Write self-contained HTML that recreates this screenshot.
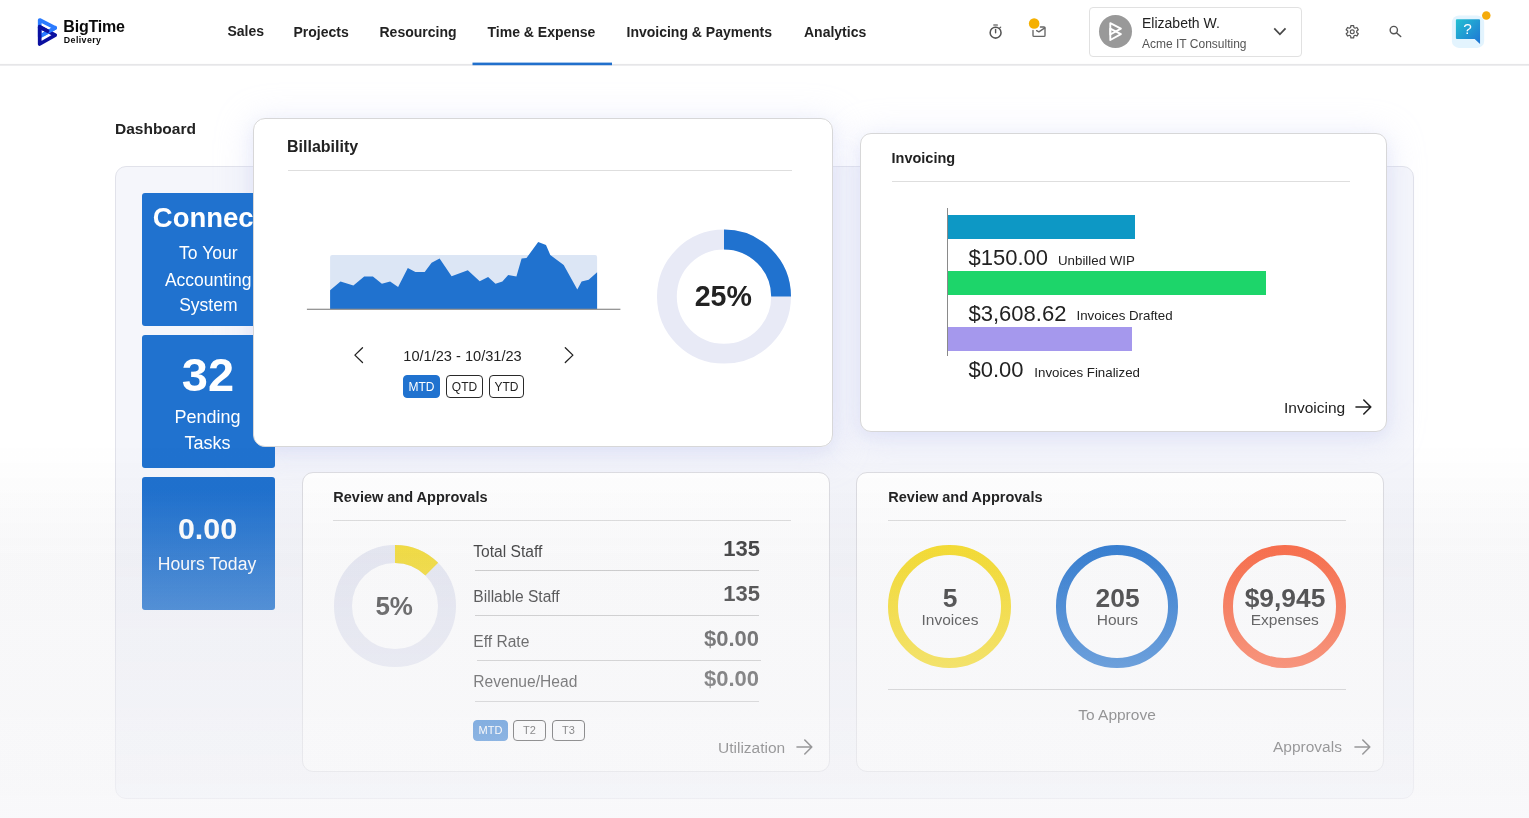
<!DOCTYPE html>
<html>
<head>
<meta charset="utf-8">
<title>BigTime Dashboard</title>
<style>
*{box-sizing:border-box;margin:0;padding:0}
html,body{width:1529px;height:818px;overflow:hidden;background:#fff}
body{font-family:"Liberation Sans",sans-serif;color:#222;position:relative}
#root{position:absolute;left:0;top:0;width:1529px;height:818px;will-change:transform}
.abs{position:absolute}
.t{position:absolute;white-space:nowrap;line-height:1}
.b{font-weight:bold}
/* header */
#hdr{position:absolute;left:0;top:0;width:1529px;height:66px;background:#fff}
.nav{position:absolute;top:24px;font-size:14px;font-weight:bold;color:#222;white-space:nowrap;line-height:16px}
#acct{position:absolute;left:1089px;top:7px;width:213px;height:50px;border:1px solid #e1e1e1;border-radius:4px;background:#fff}
/* panel */
#panel{position:absolute;left:115px;top:166px;width:1299px;height:633px;border-radius:11px;background:#f5f6fb;border:1px solid #e1e2ea}
.tile{position:absolute;left:142px;width:133px;height:133px;border-radius:3px;background:#2072cf;color:#fff;text-align:center;overflow:hidden}
.card{position:absolute;background:#fff;border:1px solid #d7d7d8;border-radius:11px}
.sh{position:absolute;border-radius:12px;box-shadow:0 5px 14px 0 rgba(196,202,242,.24),0 5px 34px 3px rgba(208,212,245,.40)}
.in{position:absolute;left:-1px;top:-1px;width:100%;height:100%}
.hr{position:absolute;height:1px;background:#dedede}
.btn{position:absolute;padding-top:.6px;border:1px solid #2a2a2a;border-radius:4px;font-size:12px;text-align:center;color:#222;background:#fff}
#fade{position:absolute;left:0;top:440px;width:1529px;height:378px;pointer-events:none;background:linear-gradient(to bottom,rgba(248,248,250,0) 0%,rgba(248,248,250,0) 13%,rgba(248,248,250,.66) 100%),linear-gradient(to bottom,rgba(10,10,50,0) 0%,rgba(10,10,50,.031) 32%,rgba(10,10,50,.031) 88%,rgba(10,10,50,.02) 100%)}
</style>
</head>
<body>
<div id="root">

<!-- ================= HEADER ================= -->
<div id="hdr">
  <svg class="abs" style="left:34px;top:14px" width="28" height="36" viewBox="0 0 28 36">
    <g fill="none" stroke-width="3.7" stroke-linejoin="round" stroke-linecap="round">
      <path d="M5.7 6 L21.2 13.8 L5.7 22.6 Z" stroke="#2b7bff"/>
      <path d="M5.7 12.8 L21.2 21.2 L5.7 30 Z" stroke="#0b10a0"/>
      <path d="M21.2 13.8 L9.5 20.4" stroke="#2b7bff"/>
      <path d="M5.7 12.8 L13.6 17.1" stroke="#0b10a0"/>
    </g>
  </svg>
  <div class="t b" style="left:63.3px;top:18.8px;font-size:16px;letter-spacing:-.2px;color:#0a0a0a">BigTime</div>
  <div class="t b" style="left:63.8px;top:35.6px;font-size:8.8px;letter-spacing:.42px;color:#0a0a0a">Delivery</div>

  <div class="nav" style="left:227.5px;top:23px">Sales</div>
  <div class="nav" style="left:293.5px">Projects</div>
  <div class="nav" style="left:379.5px">Resourcing</div>
  <div class="nav" style="left:487.5px">Time &amp; Expense</div>
  <div class="nav" style="left:626.5px">Invoicing &amp; Payments</div>
  <div class="nav" style="left:804px">Analytics</div>
  

  <svg class="abs" style="left:0;top:0" width="1529" height="70" viewBox="0 0 1529 70" fill="none">
    <rect x="0" y="63.9" width="1529" height="1.8" fill="#e6e6e8"/>
    <rect x="472.5" y="62.6" width="139.5" height="2.6" fill="#2170cc"/>
    <g stroke="#555" stroke-width="1.55" stroke-linecap="round">
      <circle cx="995.6" cy="32.65" r="5.45"/>
      <path d="M995.6 29.5 V32.8" stroke-width="1.4"/>
      <path d="M999.7 27.9 L1000.7 27.1" stroke-width="1.2"/>
    </g>
    <rect x="993.3" y="24.1" width="4.6" height="2.1" rx=".4" fill="#9a9a9a"/>
    <g stroke="#666" stroke-width="1.35" stroke-linejoin="round" stroke-linecap="round">
      <path d="M1040.4 27 H1044 Q1045 27 1045 28 V35.4 Q1045 36.4 1044 36.4 H1034 Q1033 36.4 1033 35.4 V30.4"/>
      <path d="M1036.6 30.6 L1038.9 31.9 L1044.8 27.9"/>
    </g>
    <circle cx="1034.15" cy="23.5" r="5.3" fill="#f5b000"/>
    <path d="M1350.62 27.50 L1350.88 25.55 L1353.62 25.55 L1353.88 27.50 L1355.11 28.21 L1356.93 27.46 L1358.31 29.84 L1356.74 31.04 L1356.74 32.46 L1358.31 33.66 L1356.93 36.04 L1355.11 35.29 L1353.88 36.00 L1353.62 37.95 L1350.88 37.95 L1350.62 36.00 L1349.39 35.29 L1347.57 36.04 L1346.19 33.66 L1347.76 32.46 L1347.76 31.04 L1346.19 29.84 L1347.57 27.46 L1349.39 28.21 Z" stroke="#555" stroke-width="1.25" stroke-linejoin="round"/>
    <circle cx="1352.25" cy="31.75" r="1.95" stroke="#555" stroke-width="1.15"/>
    <circle cx="1393.8" cy="30.05" r="3.65" stroke="#555" stroke-width="1.4"/>
    <path d="M1396.7 33 L1400.7 36.5" stroke="#555" stroke-width="1.5" stroke-linecap="round"/>
    <defs><linearGradient id="hg" x1="0" y1="0" x2="1" y2="1"><stop offset="0" stop-color="#23c0d2"/><stop offset="1" stop-color="#1f74d4"/></linearGradient></defs>
    <rect x="1451.9" y="15.4" width="32.3" height="32.5" rx="7" fill="#e3f4fe"/>
    <path d="M1456.9 19.25 H1479.05 Q1480.05 19.25 1480.05 20.25 V44.05 L1474.65 38.96 H1456.9 Q1455.9 38.96 1455.9 37.96 V20.25 Q1455.9 19.25 1456.9 19.25 Z" fill="url(#hg)"/>
    <text x="1467.6" y="33.9" font-family="Liberation Sans, sans-serif" font-size="15.4" fill="#fff" text-anchor="middle">?</text>
    <circle cx="1486.3" cy="15.45" r="4.25" fill="#f5ab0a"/>
  </svg>

  <div id="acct">
    <div class="abs" style="left:9.1px;top:7.3px;width:32.8px;height:32.8px;border-radius:50%;background:#999"></div>
    <svg class="abs" style="left:-1px;top:-1px" width="60" height="50" viewBox="1089 7 60 50" fill="none" stroke="#fff" stroke-width="1.9" stroke-linejoin="round" stroke-linecap="round">
      <path d="M1110.3 23.2 L1120.9 28.6 L1110.3 34.5 Z"/>
      <path d="M1110.3 28.6 L1120.9 34.1 L1110.3 40 Z"/>
    </svg>
    <div class="t" style="left:52px;top:7.7px;font-size:14px;color:#222">Elizabeth W.</div>
    <div class="t" style="left:52px;top:30px;font-size:12px;color:#555">Acme IT Consulting</div>
    <svg class="abs" style="left:182px;top:18.4px" width="16" height="12" viewBox="0 0 16 12" fill="none" stroke="#484848" stroke-width="1.8" stroke-linecap="square" stroke-linejoin="miter">
      <path d="M2.9 3.1 L7.9 8.3 L12.9 3.1"/>
    </svg>
  </div>

</div>

<!-- ================= PAGE ================= -->
<div class="t b" style="left:115px;top:120.5px;font-size:15.5px;color:#222">Dashboard</div>
<div id="panel"></div>
<div class="sh" style="left:252.5px;top:118px;width:580px;height:328.5px"></div>
<div class="sh" style="left:860px;top:133px;width:527px;height:299px"></div>

<!-- tiles -->
<div class="tile" style="top:193px">
  <div class="t b" style="left:-0.7px;width:133px;top:11.2px;font-size:27.5px">Connect</div>
  <div class="t" style="left:-0.2px;width:133px;top:51.7px;font-size:17.5px">To Your</div>
  <div class="t" style="left:-0.3px;width:133px;top:78.5px;font-size:17.5px">Accounting</div>
  <div class="t" style="left:-0.2px;width:133px;top:103.8px;font-size:17.5px">System</div>
</div>
<div class="tile" style="top:335px">
  <div class="t b" style="left:-0.6px;width:133px;top:16px;font-size:47px">32</div>
  <div class="t" style="left:-1px;width:133px;top:72.6px;font-size:18px">Pending</div>
  <div class="t" style="left:-1.1px;width:133px;top:99.2px;font-size:18px">Tasks</div>
</div>
<div class="tile" style="top:477px">
  <div class="t b" style="left:-1px;width:133px;top:35.8px;font-size:30.4px">0.00</div>
  <div class="t" style="left:-1.5px;width:133px;top:79px;font-size:17.6px">Hours Today</div>
</div>

<!-- ============ Bottom-left card : Utilization ============ -->
<div class="card" id="c3" style="left:302px;top:472px;width:528px;height:300px;box-shadow:none;background:#fff;border-color:#dddde2"><div class="in">
  <div class="t b" style="left:31.3px;top:18.2px;font-size:14.5px">Review and Approvals</div>
  <div class="hr" style="left:31px;top:47.5px;width:458px"></div>
  <svg class="abs" style="left:30.7px;top:72.4px" width="124" height="124" viewBox="0 0 124 124">
    <circle cx="62" cy="62" r="52" fill="none" stroke="#e7e9f4" stroke-width="18"/>
    <path d="M62 10 A52 52 0 0 1 98.77 25.23" fill="none" stroke="#f5dc2e" stroke-width="18"/>
  </svg>
  <div class="t b" style="left:30.2px;width:124px;text-align:center;top:121.2px;font-size:26px;color:#444">5%</div>

  <div class="t" style="left:171.3px;top:71.8px;font-size:15.6px;color:#333">Total Staff</div>
  <div class="t b" style="right:68px;top:66.2px;font-size:22px;color:#333">135</div>
  <div class="hr" style="left:173px;top:98px;width:284px;background:#c9c9c9;height:1px"></div>

  <div class="t" style="left:171.3px;top:116.8px;font-size:15.6px;color:#333">Billable Staff</div>
  <div class="t b" style="right:68px;top:111.2px;font-size:22px;color:#333">135</div>
  <div class="hr" style="left:173px;top:143px;width:284px;background:#c9c9c9;height:1px"></div>

  <div class="t" style="left:171.3px;top:161.8px;font-size:15.6px;color:#333">Eff Rate</div>
  <div class="t b" style="right:69px;top:155.7px;font-size:22px;color:#444">$0.00</div>
  <div class="hr" style="left:175px;top:187.7px;width:284px;background:#c9c9c9;height:1px"></div>

  <div class="t" style="left:171.3px;top:202px;font-size:15.6px;color:#333">Revenue/Head</div>
  <div class="t b" style="right:69px;top:196.2px;font-size:22px;color:#444">$0.00</div>
  <div class="hr" style="left:173px;top:228.7px;width:284px;background:#c9c9c9;height:1px"></div>

  <div class="btn" style="left:171px;top:247.5px;width:35px;height:21px;line-height:19px;background:#2072cf;border-color:#2072cf;color:#fff;font-size:11px">MTD</div>
  <div class="btn" style="left:211px;top:247.5px;width:33px;height:21px;line-height:19px;font-size:11px">T2</div>
  <div class="btn" style="left:250px;top:247.5px;width:33px;height:21px;line-height:19px;font-size:11px">T3</div>

  <div class="t" style="left:416px;top:267.8px;font-size:15.5px;color:#333">Utilization</div>
  <svg class="abs" style="left:492px;top:265.8px" width="20" height="18" viewBox="0 0 20 18" fill="none" stroke="#333" stroke-width="1.6" stroke-linecap="round" stroke-linejoin="round">
    <path d="M3 9 H17.8 M10.8 2 L17.8 9 L10.8 16"/>
  </svg>
</div>
</div>

<!-- ============ Bottom-right card : Approvals ============ -->
<div class="card" id="c4" style="left:856px;top:472px;width:528px;height:300px;box-shadow:none;background:#fff;border-color:#dddde2"><div class="in">
  <div class="t b" style="left:32.3px;top:18.2px;font-size:14.5px">Review and Approvals</div>
  <div class="hr" style="left:32px;top:47.5px;width:458px"></div>

  <div class="abs" style="left:32.1px;top:73.3px;width:122.5px;height:122.5px;border-radius:50%;border:10px solid #f8dc1c"></div>
  <div class="t b" style="left:33.2px;width:122px;text-align:center;top:112.6px;font-size:26.4px;color:#2a2a2a">5</div>
  <div class="t" style="left:33px;width:122px;text-align:center;top:139.8px;font-size:15.5px;color:#333">Invoices</div>

  <div class="abs" style="left:199.7px;top:73.3px;width:122.5px;height:122.5px;border-radius:50%;border:10px solid #2072cf"></div>
  <div class="t b" style="left:200.6px;width:122px;text-align:center;top:112.6px;font-size:26.4px;color:#2a2a2a">205</div>
  <div class="t" style="left:200.4px;width:122px;text-align:center;top:139.8px;font-size:15.5px;color:#333">Hours</div>

  <div class="abs" style="left:367.1px;top:73.3px;width:122.5px;height:122.5px;border-radius:50%;border:10px solid #fd6038"></div>
  <div class="t b" style="left:368px;width:122px;text-align:center;top:112.6px;font-size:26.4px;color:#2a2a2a">$9,945</div>
  <div class="t" style="left:367.8px;width:122px;text-align:center;top:139.8px;font-size:15.5px;color:#333">Expenses</div>

  <div class="hr" style="left:32.3px;top:216.7px;width:458px;height:1px;background:#c9c9c9"></div>
  <div class="t" style="left:32px;width:458px;text-align:center;top:234.5px;font-size:15.5px;color:#444">To Approve</div>

  <div class="t" style="left:417px;top:267px;font-size:15.5px;color:#333">Approvals</div>
  <svg class="abs" style="left:495.6px;top:265.8px" width="20" height="18" viewBox="0 0 20 18" fill="none" stroke="#333" stroke-width="1.6" stroke-linecap="round" stroke-linejoin="round">
    <path d="M3 9 H17.8 M10.8 2 L17.8 9 L10.8 16"/>
  </svg>
</div>
</div>

<!-- ============ Invoicing card ============ -->
<div class="card" id="c2" style="left:860px;top:133px;width:527px;height:299px"><div class="in">
  <div class="t b" style="left:31.5px;top:18px;font-size:14.5px">Invoicing</div>
  <div class="hr" style="left:31.5px;top:48px;width:458px"></div>
  <div class="abs" style="left:86.5px;top:75px;width:1px;height:148px;background:#8a8a8a"></div>
  <div class="abs" style="left:87.5px;top:82px;width:187px;height:24px;background:#0d98c5"></div>
  <div class="abs" style="left:87.5px;top:137.5px;width:318px;height:24.5px;background:#1dd56a"></div>
  <div class="abs" style="left:87.5px;top:194px;width:184.5px;height:24px;background:#a598ed"></div>

  <div class="t" style="left:108.5px;top:114px;font-size:22px;color:#222">$150.00</div>
  <div class="t" style="left:198px;top:120.7px;font-size:13.3px;color:#222">Unbilled WIP</div>
  <div class="t" style="left:108.5px;top:169.5px;font-size:22px;color:#222">$3,608.62</div>
  <div class="t" style="left:216.5px;top:176.2px;font-size:13.3px;color:#222">Invoices Drafted</div>
  <div class="t" style="left:108.5px;top:226px;font-size:22px;color:#222">$0.00</div>
  <div class="t" style="left:174.3px;top:232.5px;font-size:13.3px;color:#222">Invoices Finalized</div>

  <div class="t" style="left:424px;top:267px;font-size:15.5px;color:#222">Invoicing</div>
  <svg class="abs" style="left:493px;top:265px" width="20" height="18" viewBox="0 0 20 18" fill="none" stroke="#222" stroke-width="1.6" stroke-linecap="round" stroke-linejoin="round">
    <path d="M3 9 H17.8 M10.8 2 L17.8 9 L10.8 16"/>
  </svg>
</div>
</div>

<!-- ============ Billability card ============ -->
<div class="card" id="c1" style="left:252.5px;top:118px;width:580px;height:328.5px;border-radius:12px"><div class="in">
  <div class="t b" style="left:34.5px;top:21px;font-size:16px">Billability</div>
  <div class="hr" style="left:35px;top:51.5px;width:504px"></div>

  <svg class="abs" style="left:0;top:0" width="580" height="328" viewBox="253.1 117.9 580 328">
    <path d="M330.2 257 Q330.2 255 332.2 255 H595.2 Q597.2 255 597.2 257 V309 H330.2 Z" fill="#dce6f5"/>
    <path d="M330.2 309 L330.2 290.1 L340.6 281.5 L353.5 285.4 L364.3 276.5 L373 276.5 L382 283.7 L390.2 281.5 L398.2 286.9 L407.9 267.9 L415.5 271.8 L424.8 271.8 L431.7 262.7 L439.7 258.4 L451.7 276.1 L467.9 270.1 L479.8 281.1 L488.2 277 L495.6 283.7 L502.5 281.3 L508.3 275 L516.5 276.5 L521.7 258.4 L526.6 258 L538.3 241.8 L546.1 245 L550.4 255 L563.8 264.9 L577.4 289.5 L581.7 281.5 L588.8 279.6 L597.2 272.2 L597.2 309 Z" fill="#2072cf"/>
    <rect x="307" y="308.6" width="313.5" height="1.2" fill="#8c8c8c"/>
    <circle cx="724.1" cy="296.5" r="57.1" fill="none" stroke="#e8eaf6" stroke-width="19.8"/>
    <path d="M724.1 239.4 A57.1 57.1 0 0 1 781.2 296.5" fill="none" stroke="#2072cf" stroke-width="19.8"/>
    <path d="M362.6 347.6 L355 355 L362.6 362.4" fill="none" stroke="#222" stroke-width="1.3" stroke-linecap="round" stroke-linejoin="round"/>
    <path d="M565.4 347.6 L573 355 L565.4 362.4" fill="none" stroke="#222" stroke-width="1.3" stroke-linecap="round" stroke-linejoin="round"/>
  </svg>
  <div class="t b" style="left:403.8px;width:134px;text-align:center;top:164.1px;font-size:28.6px;color:#222">25%</div>
  <div class="t" style="left:110px;width:200px;text-align:center;top:230.8px;font-size:14.6px;color:#222">10/1/23 - 10/31/23</div>

  <div class="btn" style="left:150.5px;top:257px;width:37px;height:23px;line-height:21px;background:#2072cf;border-color:#2072cf;color:#fff">MTD</div>
  <div class="btn" style="left:193.5px;top:257px;width:37px;height:23px;line-height:21px">QTD</div>
  <div class="btn" style="left:236.5px;top:257px;width:35px;height:23px;line-height:21px">YTD</div>
</div>
</div>

<div id="fade"></div>
</div>
</body>
</html>
